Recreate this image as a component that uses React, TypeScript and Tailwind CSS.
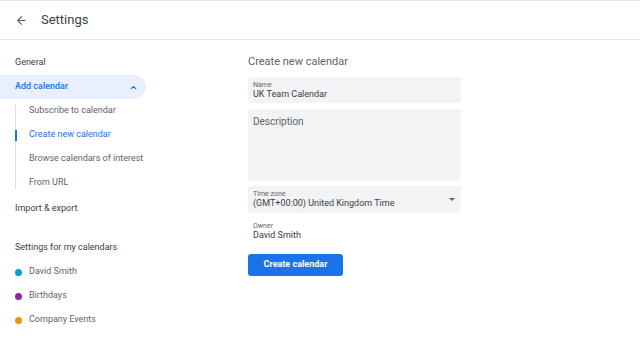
import { ArrowLeft, ChevronUp } from 'lucide-react';

const subItems = [
  { label: 'Subscribe to calendar', active: false },
  { label: 'Create new calendar', active: true },
  { label: 'Browse calendars of interest', active: false },
  { label: 'From URL', active: false },
];

const calendars = [
  { name: 'David Smith', color: 'bg-[#039be5]' },
  { name: 'Birthdays', color: 'bg-[#8e24aa]' },
  { name: 'Company Events', color: 'bg-[#f09300]' },
];

export default function App() {
  return (
    <div className="w-[640px] h-[339px] bg-white overflow-hidden font-['Roboto',sans-serif] text-[#3c4043]">
      {/* Header */}
      <div className="h-10 border-y border-[#e3e3e3] flex items-center">
        <ArrowLeft className="ml-[15px] w-[13px] h-[13px] text-[#5f6368]" strokeWidth={2} />
        <span className="ml-[13px] text-[13px] text-[#3c4043]">Settings</span>
      </div>

      <div className="flex">
        {/* Sidebar */}
        <div className="w-[146px] pt-[11px] text-[9px]">
          <div className="h-6 flex items-center pl-[15px] text-[#3c4043]">General</div>
          <div className="h-6 flex items-center justify-between pl-[15px] pr-[8px] rounded-r-full bg-[#e8f0fe] text-[#1a73e8] font-medium">
            <span>Add calendar</span>
            <ChevronUp className="w-[9px] h-[9px]" strokeWidth={3} />
          </div>
          <div className="relative ml-[15px] before:content-[''] before:absolute before:left-0 before:top-[6px] before:bottom-[6px] before:w-px before:bg-[#dadce0]">
            {subItems.map((s) => (
              <div
                key={s.label}
                className={`relative h-6 flex items-center pl-[14px] ${s.active ? 'text-[#1a73e8]' : 'text-[#5f6368]'}`}
              >
                {s.active && <span className="absolute left-0 top-[7px] w-[2px] h-[11px] bg-[#1a73e8]"></span>}
                {s.label}
              </div>
            ))}
          </div>
          <div className="h-6 mt-[2px] flex items-center pl-[15px] text-[#3c4043]">Import &amp; export</div>
          <div className="h-6 mt-[15px] flex items-center pl-[15px] text-[#3c4043]">Settings for my calendars</div>
          {calendars.map((c) => (
            <div key={c.name} className="h-6 flex items-center pl-[15px] text-[#5f6368]">
              <span className={`w-[7px] h-[7px] rounded-full ${c.color}`}></span>
              <span className="ml-[7px]">{c.name}</span>
            </div>
          ))}
        </div>

        {/* Main */}
        <div className="ml-[102px] pt-[15px] w-[213px]">
          <div className="text-[11px] text-[#5f6368] leading-[14px]">Create new calendar</div>

          <div className="mt-[8px] h-[26px] bg-[#f1f3f4] rounded-[3px] px-[5px] pt-[4px]">
            <div className="text-[7px] leading-[8px] text-[#5f6368]">Name</div>
            <div className="text-[9px] leading-[11px] text-[#3c4043]">UK Team Calendar</div>
          </div>

          <div className="mt-[6px] h-[72px] bg-[#f1f3f4] rounded-[3px] px-[5px] pt-[7px]">
            <div className="text-[10px] leading-[12px] text-[#5f6368]">Description</div>
          </div>

          <div className="mt-[5px] h-[27px] bg-[#f1f3f4] rounded-[3px] pl-[5px] pr-[6px] pt-[4px] flex justify-between">
            <div>
              <div className="text-[7px] leading-[8px] text-[#5f6368]">Time zone</div>
              <div className="text-[9px] leading-[11px] text-[#3c4043]">(GMT+00:00) United Kingdom Time</div>
            </div>
            <div className="mt-[8px] w-0 h-0 border-l-[3px] border-r-[3px] border-t-[3px] border-l-transparent border-r-transparent border-t-[#5f6368]"></div>
          </div>

          <div className="mt-[9px] px-[5px]">
            <div className="text-[7px] leading-[8px] text-[#5f6368]">Owner</div>
            <div className="text-[9px] leading-[11px] text-[#3c4043]">David Smith</div>
          </div>

          <button className="mt-[13px] w-[95px] h-[22px] rounded-[3px] bg-[#1a73e8] text-white text-[9px] font-bold flex items-center justify-center">
            Create calendar
          </button>
        </div>
      </div>
    </div>
  );
}
